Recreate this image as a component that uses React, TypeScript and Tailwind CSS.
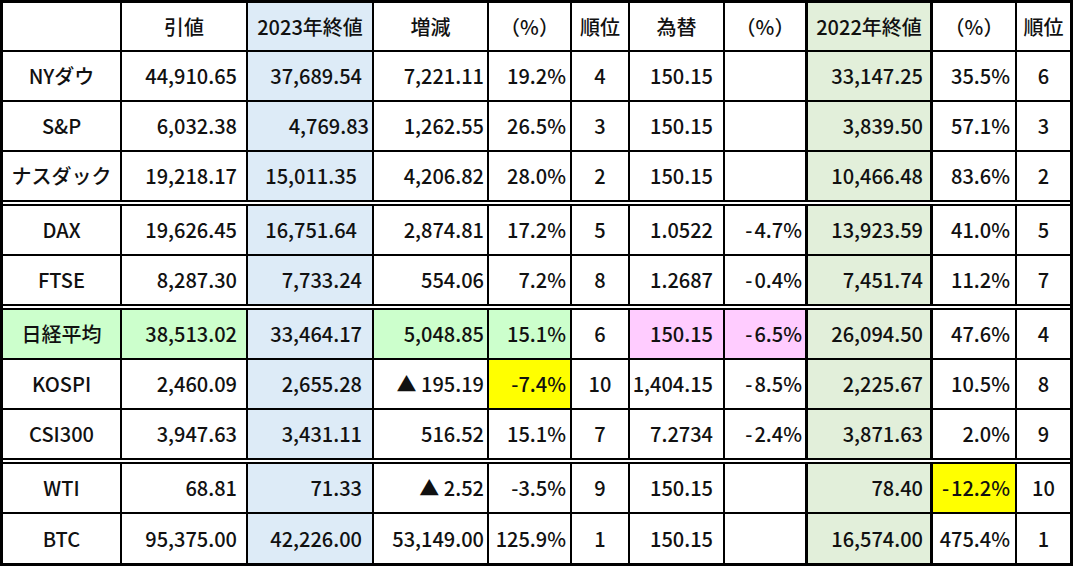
type Col = { border: string; align: string; pr: string; bg: string };

// column widths include each cell's right border
const COLS: Col[] = [
    { border: 'border-r-2', align: 'justify-center', pr: '', bg: 'bg-white' },
    { border: 'border-r-2', align: 'justify-end', pr: 'pr-[9px]', bg: 'bg-white' },
    { border: 'border-r-2', align: 'justify-end', pr: 'pr-[10px]', bg: 'bg-[#ddebf7]' },
    { border: 'border-r-2', align: 'justify-end', pr: 'pr-[3px]', bg: 'bg-white' },
    { border: 'border-r-2', align: 'justify-end', pr: 'pr-[4px]', bg: 'bg-white' },
    { border: 'border-r-2', align: 'justify-center', pr: '', bg: 'bg-white' },
    { border: 'border-r-2', align: 'justify-end', pr: 'pr-[10px]', bg: 'bg-white' },
    { border: 'border-r-[3px]', align: 'justify-end', pr: 'pr-[3px]', bg: 'bg-white' },
    { border: 'border-r-[3px]', align: 'justify-end', pr: 'pr-[7px]', bg: 'bg-[#e2efda]' },
    { border: 'border-r-2', align: 'justify-end', pr: 'pr-[5px]', bg: 'bg-white' },
    { border: '', align: 'justify-center', pr: '', bg: 'bg-white' },
];

const GRID = 'grid grid-cols-[119px_126px_126px_115px_83px_58px_95px_83px_125px_84px_53px]';

const HEADERS = ['', '引値', '2023年終値', '増減', '（%）', '順位', '為替', '（%）', '2022年終値', '（%）', '順位'];

type Row = {
    cells: string[];
    bg?: Record<number, string>;
    pr?: Record<number, string>;
    sep?: 'double' | 'none';
};

const GREEN = 'bg-[#ccffcc]';
const PINK = 'bg-[#ffccff]';
const YELLOW = 'bg-[#ffff00]';

const ROWS: Row[] = [
    { cells: ['NYダウ', '44,910.65', '37,689.54', '7,221.11', '19.2%', '4', '150.15', '', '33,147.25', '35.5%', '6'] },
    { cells: ['S&P', '6,032.38', '4,769.83', '1,262.55', '26.5%', '3', '150.15', '', '3,839.50', '57.1%', '3'], pr: { 2: 'pr-[3px]' } },
    {
        cells: ['ナスダック', '19,218.17', '15,011.35', '4,206.82', '28.0%', '2', '150.15', '', '10,466.48', '83.6%', '2'],
        pr: { 2: 'pr-[15px]' },
        sep: 'double',
    },
    { cells: ['DAX', '19,626.45', '16,751.64', '2,874.81', '17.2%', '5', '1.0522', '-4.7%', '13,923.59', '41.0%', '5'], pr: { 2: 'pr-[15px]' } },
    { cells: ['FTSE', '8,287.30', '7,733.24', '554.06', '7.2%', '8', '1.2687', '-0.4%', '7,451.74', '11.2%', '7'], sep: 'double' },
    {
        cells: ['日経平均', '38,513.02', '33,464.17', '5,048.85', '15.1%', '6', '150.15', '-6.5%', '26,094.50', '47.6%', '4'],
        bg: { 0: GREEN, 1: GREEN, 3: GREEN, 4: GREEN, 6: PINK, 7: PINK },
    },
    { cells: ['KOSPI', '2,460.09', '2,655.28', '▲ 195.19', '-7.4%', '10', '1,404.15', '-8.5%', '2,225.67', '10.5%', '8'], bg: { 4: YELLOW } },
    { cells: ['CSI300', '3,947.63', '3,431.11', '516.52', '15.1%', '7', '7.2734', '-2.4%', '3,871.63', '2.0%', '9'], sep: 'double' },
    { cells: ['WTI', '68.81', '71.33', '▲ 2.52', '-3.5%', '9', '150.15', '', '78.40', '-12.2%', '10'], bg: { 9: YELLOW } },
    { cells: ['BTC', '95,375.00', '42,226.00', '53,149.00', '125.9%', '1', '150.15', '', '16,574.00', '475.4%', '1'], sep: 'none' },
];

function Value({ text, col }: { text: string; col: number }) {
    // Excel draws the minus a bit apart in the fx / 2022 % columns
    if ((col === 7 || col === 9) && text.startsWith('-')) {
        return (
            <span>
                <span className="mr-[2px]">-</span>
                {text.slice(1)}
            </span>
        );
    }
    return <span>{text}</span>;
}

export default function App() {
    return (
        <div className="min-h-screen bg-white">
            <div className="w-[1073px] h-[566px] border-[3px] border-black text-[20px] font-medium leading-none text-[#111] font-['Noto_Sans_CJK_JP',sans-serif]">
                {/* header */}
                <div className={`${GRID} h-[49px] border-b-2 border-black`}>
                    {HEADERS.map((h, i) => (
                        <div key={i} className={`flex items-center justify-center border-black ${COLS[i].border} ${COLS[i].bg}`}>
                            {h}
                        </div>
                    ))}
                </div>

                {ROWS.map((row, r) => {
                    const rowCls =
                        row.sep === 'double'
                            ? 'h-[54px] border-b-[6px] border-double border-black'
                            : row.sep === 'none'
                              ? 'h-[49px]'
                              : 'h-[50px] border-b-2 border-black';
                    return (
                        <div key={r} className={`${GRID} ${rowCls}`}>
                            {row.cells.map((c, i) => {
                                const col = COLS[i];
                                const bg = row.bg?.[i] ?? col.bg;
                                const pr = row.pr?.[i] ?? col.pr;
                                return (
                                    <div key={i} className={`flex items-center border-black ${col.border} ${col.align} ${pr} ${bg}`}>
                                        <Value text={c} col={i} />
                                    </div>
                                );
                            })}
                        </div>
                    );
                })}
            </div>
        </div>
    );
}
